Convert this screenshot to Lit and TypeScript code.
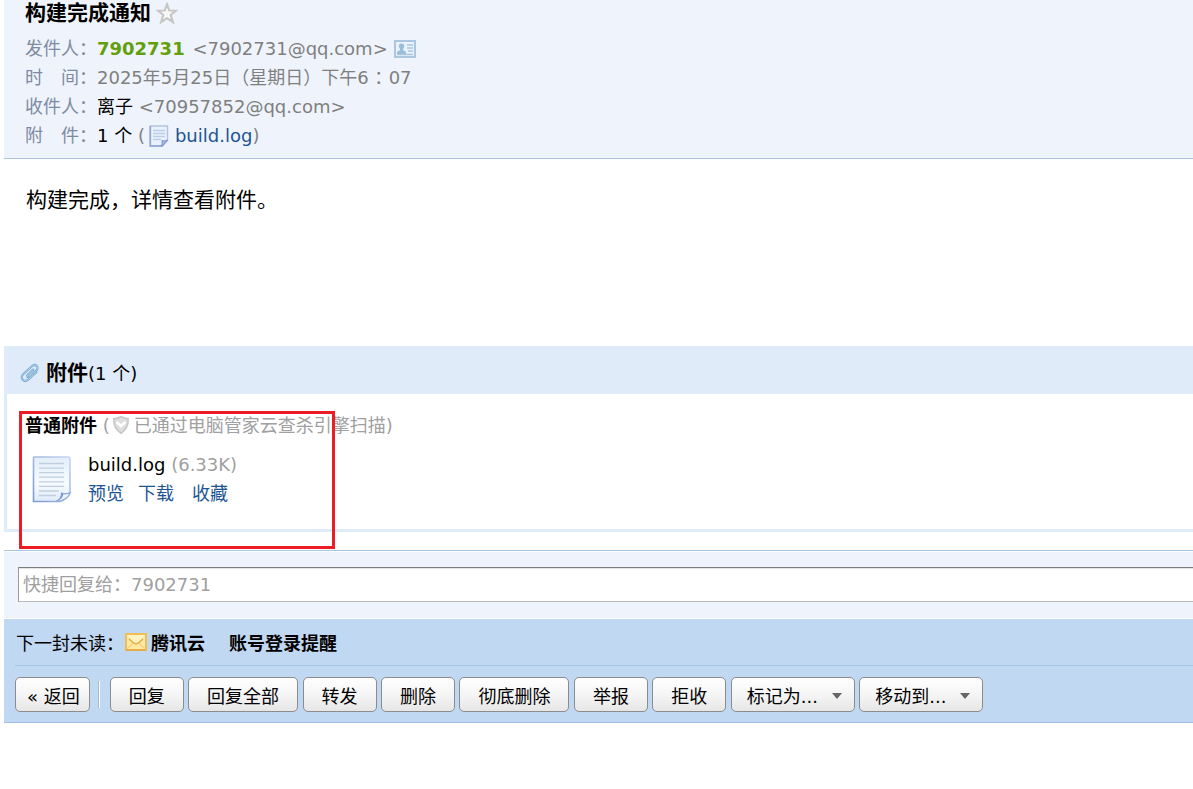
import { LitElement, html, css, svg } from "lit";
import { customElement, state } from "lit/decorators.js";

const starIcon = svg`<svg class="icon" width="22" height="22" viewBox="0 0 22 22" aria-hidden="true">
    <path d="M11 2.500 13.200 8.500 20 8.700 14.600 12.900 16.800 20 11 16 5.200 20 7.400 12.900 2 8.700 8.800 8.500Z"
      fill="#fff" stroke="#c6c6c6" stroke-width="2.200"/>
    <path d="M11 7v7M7.500 10.500h7" stroke="#f4f4f4" stroke-width="1.500" fill="none"/>
  </svg>`;

const cardIcon = svg`<svg class="icon" width="22" height="18" viewBox="0 0 22 18" aria-hidden="true">
    <rect x="1" y="1" width="20" height="16" fill="#e9f2fa" stroke="#abc7df" stroke-width="2"/>
    <path d="M7.500 3.500c1.900 0 2.900 1.300 2.700 3-.1 1.200-.6 2-1.100 2.600v1.200c1.600.5 3 1.100 3 2.700v1H3v-1c0-1.600 1.400-2.200 3-2.700V9.100c-.4-.6-.9-1.400-1.100-2.600-.2-1.700.7-3 2.600-3Z" fill="#9abdd9"/>
    <path d="M13 5h6M13 8h6M14 11h5M3 14.500h16" stroke="#abc7df" stroke-width="1.400"/>
  </svg>`;

const noteIcon = svg`<svg class="icon" width="20" height="22" viewBox="0 0 20 22" aria-hidden="true">
    <path d="M1.500 1h17v14.500l-5 5.500h-12Z" fill="#eaf2fc" stroke="#b3c2e4" stroke-width="1.500"/>
    <path d="M1.200 1v20h12" fill="none" stroke="#8fa3d4" stroke-width="1.500"/>
    <path d="M4 5.500h12M4 8.500h12M4 11.500h12M4 14.500h8" stroke="#bccdea" stroke-width="1.500"/>
    <path d="M12 20.500c1.200-1.200 1.300-2.800 1-5 2 .6 3.800.6 5.500-.5l-5.200 6Z" fill="#a9bde4" stroke="#7790cb" stroke-width="1"/>
  </svg>`;

const clipIcon = svg`<svg class="icon" width="20" height="20" viewBox="0 0 20 20" fill="none" stroke-linecap="round" aria-hidden="true">
    <path d="M13.200 6.600 7.800 11.800c-1.500 1.600.3 3.300 1.900 1.900l6.700-6.300c3.200-3.200-.8-7.300-4.400-4.100L3.400 11c-4 4 .7 9.300 5 5.500l7.900-7.200"
      stroke="#78a7cf" stroke-width="2.200"/>
    <path d="M13.200 6.600 7.800 11.800c-1.500 1.600.3 3.300 1.900 1.900l6.700-6.300c3.200-3.200-.8-7.300-4.400-4.100L3.400 11c-4 4 .7 9.300 5 5.500l7.900-7.200"
      stroke="#bcd8ed" stroke-width=".8"/>
  </svg>`;

const shieldIcon = svg`<svg class="icon" width="18" height="20" viewBox="0 0 18 20" aria-hidden="true">
    <path d="M9 1.800c2.400 1.300 4.600 1.900 7.200 2C16.400 10 14.500 14.800 9 18.200 3.500 14.800 1.600 10 1.800 3.800c2.600-.1 4.800-.7 7.200-2Z"
      fill="#dedede" stroke="#c8c8c8" stroke-width="1.600"/>
    <path d="M4.500 7 9 11l4.500-4" fill="none" stroke="#fff" stroke-width="2.800"/>
  </svg>`;

const documentIcon = svg`<svg class="icon" width="39" height="47" viewBox="0 0 39 47" aria-hidden="true">
    <defs>
      <linearGradient id="paper" x1="0" y1="0" x2="0" y2="1">
        <stop offset="0" stop-color="#e3eefa"/><stop offset=".6" stop-color="#f6fbff"/><stop offset="1" stop-color="#dfeafb"/>
      </linearGradient>
      <linearGradient id="edge" x1="1" y1="0" x2="0" y2="1">
        <stop offset="0" stop-color="#c6d6ee"/><stop offset="1" stop-color="#7e9bd0"/>
      </linearGradient>
    </defs>
    <path d="M2.500 1h34q1.500 0 1.500 1.500V37q-3 5.500-10 8.500H1.500V2Q1.500 1 2.500 1Z" fill="url(#paper)" stroke="url(#edge)" stroke-width="1.600"/>
    <path d="M7 7.500h25M7 12.100h25M7 16.700h25M7 21.200h25M7 25.800h25M7 30.400h25M7 35h20M7 39.500h17" stroke="#c0cedf" stroke-width="1.300"/>
    <path d="M24 45.500c4-1.800 5.600-4.600 5.500-8.500 3 1.300 5.600 1.200 8.500-.5-1 5-6.500 8.700-14 9Z" fill="#edf4fe" stroke="#8ba6d8" stroke-width="1.100"/>
    <path d="M24 45.500c4-1.800 5.600-4.600 5.500-8.500l1.700.7c0 3.200-2.200 5.900-7.200 7.800Z" fill="#6f90cc"/>
  </svg>`;

const mailIcon = svg`<svg class="icon" width="22" height="18" viewBox="0 0 22 18" aria-hidden="true">
    <rect x="1" y="1" width="20" height="16" fill="#fde9a3" stroke="#efbf57" stroke-width="2"/>
    <path d="M2.500 15.500 9 9M19.500 15.500 13 9" stroke="#f7d27a" stroke-width="1.500"/>
    <path d="M2 2h18l-6.500 7.500q-2.500 2-5 0Z" fill="#fff3c4"/>
    <path d="M4 6 8 9.500q3 2.500 6 0L18 6" fill="none" stroke="#e3a93f" stroke-width="1.400"/>
    <path d="M1 17h20" stroke="#e2a93c" stroke-width="1.500"/>
  </svg>`;

const arrowIcon = svg`<svg class="arrow" width="10" height="6" viewBox="0 0 10 6" aria-hidden="true">
    <path d="M0 0h10L5 6Z" fill="#666"/>
  </svg>`;

@customElement("app-root")
export class AppRoot extends LitElement {
  @state() private reply = "";

  static styles = css`
    :host {
      display: block;
      padding-left: 4px;
      background: #fff;
      color: #000;
      font: 18px/29px "DejaVu Sans", "Noto Sans CJK SC", sans-serif;
      overflow-x: hidden;
    }
    h1, h2, h3, p, dl, dd { margin: 0; }
    .icon { display: block; flex: none; }
    a { color: #1e5494; text-decoration: none; }
    button, input, select { font: inherit; color: inherit; box-sizing: border-box; margin: 0; }
    .row { display: flex; align-items: center; }

    .head {
      padding: 0 21px 8px;
      background: #eff4fc;
      border-bottom: 1px solid #a9c4df;
    }
    .title { gap: 5px; height: 26px; margin-bottom: 8px; }
    .title h1 { font-size: 21px; line-height: 26px; }
    .star { padding: 0; border: 0; background: none; }
    .field { display: flex; height: 29px; }
    dt { flex: none; width: 72px; color: #7e8ba3; }
    dd { color: #7f7f7f; display: flex; align-items: center; white-space: pre; }
    .sender { color: #61a00b; font-weight: bold; margin-right: 2px; }
    .dark { color: #000; }
    .colon { padding: 0 1px; font-family: "Noto Sans CJK TC", sans-serif; }
    .card, .note { white-space: normal; }
    .card { margin-left: 6px; }
    .note { margin: 0 6px 0 4px; }

    .message {
      box-sizing: border-box;
      min-height: 187px;
      padding: 26px 22px;
      font-size: 21px;
      line-height: 30px;
    }

    .attachments {
      position: relative;
      border: solid #e0ebf9;
      border-width: 0 0 3px 3px;
    }
    .attach-head {
      height: 48px;
      margin-left: -3px;
      padding: 6px 16px 0;
      box-sizing: border-box;
      background: #e0ebf9;
    }
    .attach-head .icon { margin-right: 6px; }
    .attach-head h2 { font-size: 21px; }
    .attach-body { padding: 16px 18px 21px; }
    .kind { height: 30px; white-space: pre; color: #a0a0a0; }
    .kind h3 { font-size: 18px; color: #000; }
    .kind .icon { margin: 0 4px 0 2px; }
    .file { display: flex; gap: 17px; padding: 10px 7px 0; }
    .file .icon { margin-top: 6px; }
    .size { color: #a0a0a0; }
    .links { display: flex; gap: 14px; }
    .links .keep { margin-left: 4px; }
    .marker {
      position: absolute;
      left: 12px;
      top: 65px;
      width: 310px;
      height: 132px;
      border: 3px solid #ed1c24;
      pointer-events: none;
    }

    .reply {
      margin-top: 18px;
      padding-left: 14px;
      border-top: 1px solid #a9c4df;
      border-bottom: 1px solid #fff;
      background: #eff4fc;
      box-shadow: inset 0 1px #fff;
    }
    .reply form { padding: 16px 0; overflow: hidden; }
    .reply input {
      display: block;
      width: calc(100% + 4px);
      height: 35px;
      padding: 0 4px;
      border: 1px solid #bbb;
      border-top-color: #7c7c7c;
      border-left-color: #9a9a9a;
      border-radius: 0;
      background: #fff;
      box-shadow: inset 0 1px #e4e4e4;
      outline: none;
    }
    .reply input::placeholder { color: #a0a0a0; opacity: 1; }

    .foot {
      padding-left: 11px;
      background: #c1d8f2;
      border-bottom: 1px solid #a3bfdf;
    }
    .next {
      box-sizing: border-box;
      height: 47px;
      padding: 3px 0 0 1px;
      border-bottom: 1px solid #a3c3e2;
      white-space: pre;
    }
    .next .icon { margin: 0 4px 3px 1px; }
    .next a { color: #000; font-weight: bold; }
    .next .subject { margin-left: 24px; }
    .bar { padding: 11px 0 10px; font-size: 14px; line-height: 35px; display: flow-root; }
    .bar button, .bar select {
      height: 35px;
      border: 1px solid #8c8c8c;
      border-radius: 5px;
      background: linear-gradient(#fff, #f4f4f4 55%, #e6e6e6);
      font-size: 18px;
      line-height: 29px;
      vertical-align: top;
    }
    .bar button { padding: 4px 18px 0; }
    .bar .back { padding: 4px 9px 0 11px; }
    .divider {
      display: inline-block;
      width: 1px;
      height: 27px;
      margin: 4px 5px 0 4px;
      border-right: 1px solid #fff;
      background: #a9b9cb;
      vertical-align: top;
    }
    .drop { position: relative; display: inline-block; height: 35px; vertical-align: top; }
    .drop select { appearance: none; width: 124px; padding: 4px 28px 0 15px; }
    .arrow { position: absolute; right: 13px; top: 16px; pointer-events: none; }
  `;

  render() {
    return html`
      <header class="head" lang="zh-CN">
        <div class="row title">
          <h1>构建完成通知</h1>
          <button class="star" aria-label="星标">${starIcon}</button>
        </div>
        <dl>
          <div class="field">
            <dt>发件人：</dt>
            <dd><span class="sender">7902731</span><span> &lt;7902731@qq.com&gt;</span><span class="card">${cardIcon}</span></dd>
          </div>
          <div class="field">
            <dt>时　间：</dt>
            <dd>2025年5月25日（星期日）下午6<span class="colon">：</span>07</dd>
          </div>
          <div class="field">
            <dt>收件人：</dt>
            <dd><span class="dark">离子</span><span> &lt;70957852@qq.com&gt;</span></dd>
          </div>
          <div class="field">
            <dt>附　件：</dt>
            <dd><span class="dark">1 个</span><span> (</span><span class="note">${noteIcon}</span><a href="#file">build.log</a>)</dd>
          </div>
        </dl>
      </header>

      <p class="message" lang="zh-CN">构建完成，详情查看附件。</p>

      <section class="attachments" lang="zh-CN">
        <div class="row attach-head">${clipIcon}<h2>附件</h2><span>(1 个)</span></div>
        <div class="attach-body">
          <div class="row kind"><h3>普通附件</h3><span> (</span>${shieldIcon}<span>已通过电脑管家云查杀引擎扫描)</span></div>
          <div class="file" id="file">
            ${documentIcon}
            <div>
              <div>build.log <span class="size">(6.33K)</span></div>
              <div class="links">
                <a href="#preview">预览</a><a href="#download">下载</a><a class="keep" href="#keep">收藏</a>
              </div>
            </div>
          </div>
        </div>
        <div class="marker"></div>
      </section>

      <section class="reply" lang="zh-CN">
        <form @submit=${(e: Event) => e.preventDefault()}>
          <input type="text" aria-label="快捷回复" placeholder="快捷回复给：7902731" .value=${this.reply}
            @input=${(e: Event) => (this.reply = (e.target as HTMLInputElement).value)}>
        </form>
      </section>

      <footer class="foot" lang="zh-CN">
        <div class="row next"><span>下一封未读：</span>${mailIcon}<a href="#next">腾讯云</a><a class="subject" href="#next">账号登录提醒</a></div>
        <div class="bar">
          <button class="back">« 返回</button>
          <span class="divider"></span>
          ${["回复", "回复全部", "转发", "删除", "彻底删除", "举报", "拒收"].map((t) => html`<button>${t}</button> `)}
          ${["标记为...", "移动到..."].map(
            (t) => html`<span class="drop"><select aria-label=${t}><option>${t}</option></select>${arrowIcon}</span> `
          )}
        </div>
      </footer>
    `;
  }
}
